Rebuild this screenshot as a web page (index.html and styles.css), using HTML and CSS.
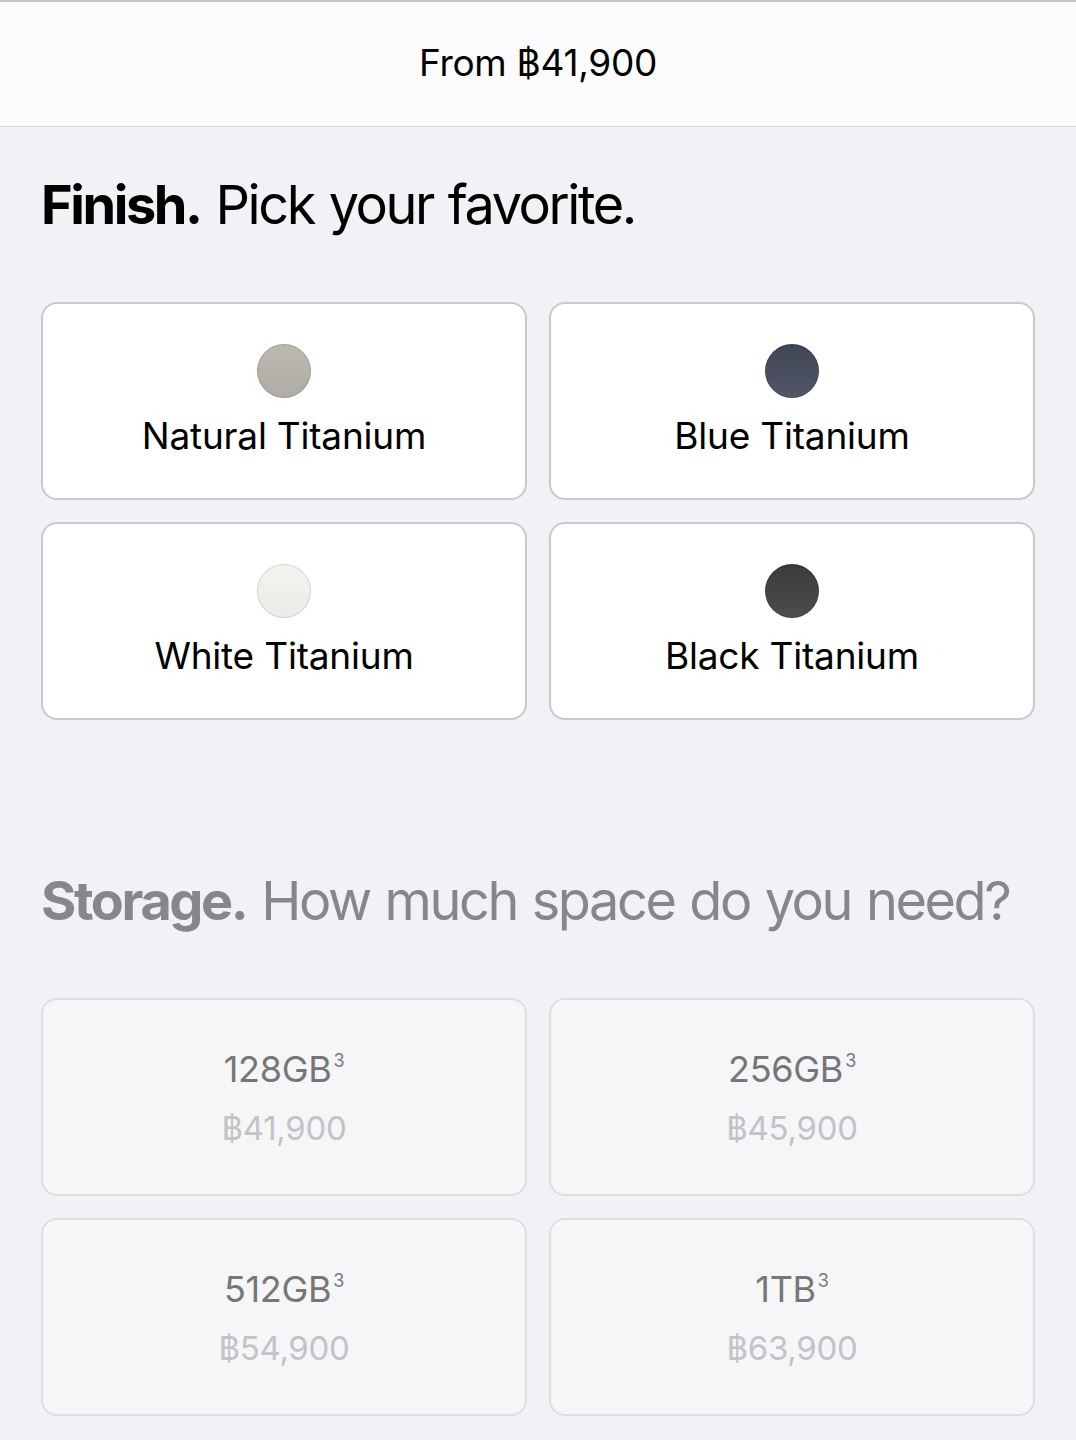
FILE: index.html
```html
<!DOCTYPE html>
<html lang="en">
<head>
  <meta charset="UTF-8" />
  <meta name="viewport" content="width=device-width, initial-scale=1.0"/>
  <title>Buy iPhone</title>
  <link rel="stylesheet" href="styles.css">
</head>
<body>

  <header class="price-bar">From ฿41,900</header>

  <main class="page">

    <!-- Finish -->
    <section class="group">
      <h2 class="group-title"><strong>Finish.</strong> Pick your favorite.</h2>
      <div class="options">
        <button class="option">
          <span class="swatch swatch-natural"></span>
          <span class="option-name">Natural Titanium</span>
        </button>
        <button class="option">
          <span class="swatch swatch-blue"></span>
          <span class="option-name">Blue Titanium</span>
        </button>
        <button class="option">
          <span class="swatch swatch-white"></span>
          <span class="option-name">White Titanium</span>
        </button>
        <button class="option">
          <span class="swatch swatch-black"></span>
          <span class="option-name">Black Titanium</span>
        </button>
      </div>
    </section>

    <!-- Storage -->
    <section class="group group-disabled">
      <h2 class="group-title"><strong>Storage.</strong> How much space do you need?</h2>
      <div class="options">
        <button class="option option-disabled">
          <span class="capacity">128GB<sup>3</sup></span>
          <span class="cost">฿41,900</span>
        </button>
        <button class="option option-disabled">
          <span class="capacity">256GB<sup>3</sup></span>
          <span class="cost">฿45,900</span>
        </button>
        <button class="option option-disabled">
          <span class="capacity">512GB<sup>3</sup></span>
          <span class="cost">฿54,900</span>
        </button>
        <button class="option option-disabled">
          <span class="capacity">1TB<sup>3</sup></span>
          <span class="cost">฿63,900</span>
        </button>
      </div>
    </section>

  </main>

</body>
</html>
```

FILE: styles.css
```css
* { box-sizing: border-box; }
body { margin: 0; font-family: Inter, "Noto Sans", sans-serif; background: #f2f2f6; color: #1d1d1f; }

.price-bar { height: 127px; display: flex; align-items: center; justify-content: center; padding-bottom: 4px; background: #fbfbfd; border-top: 2px solid #c6c6c8; border-bottom: 1px solid #d6d6d9; font-size: 37px; color: #000; letter-spacing: -0.3px; }

.page { padding: 0 41px; }
.group { padding-top: 45px; }
.group + .group { padding-top: 148px; }
.group-title { margin: 0 0 65px; height: 65px; font-size: 54px; line-height: 65px; font-weight: 400; letter-spacing: -2.4px; word-spacing: 2px; color: #000; white-space: nowrap; }
.group-title strong { font-weight: 700; }
.group-disabled .group-title { color: #86868b; }

.options { display: grid; grid-template-columns: 1fr 1fr; gap: 22px; }
.option { height: 198px; display: flex; flex-direction: column; align-items: center; justify-content: center; background: #fff; border: 2px solid #c9c9cd; border-radius: 16px; font-family: inherit; padding: 0; }

.swatch { width: 54px; height: 54px; border-radius: 50%; margin-bottom: 16px; box-shadow: inset 0 0 0 1px rgba(0,0,0,0.12); }
.swatch-natural { background: linear-gradient(#bcb9b0, #aeaca4); }
.swatch-blue { background: linear-gradient(#3f4553, #525867); }
.swatch-white { background: linear-gradient(#f3f3ef, #ebebe7); }
.swatch-black { background: linear-gradient(#3b3b3d, #4d4d4f); }
.option-name { font-size: 37px; line-height: 44px; color: #000; letter-spacing: -0.2px; }

.option-disabled { background: #f6f6f8; border-color: #dedee1; padding-bottom: 0; }
.capacity { font-size: 36px; line-height: 44px; color: #767679; letter-spacing: -0.3px; }
.capacity sup { font-size: 18px; vertical-align: 15px; line-height: 0; margin-left: 2px; }
.cost { font-size: 33px; line-height: 40px; color: #c3c3c7; margin-top: 17px; letter-spacing: -0.3px; }
```
